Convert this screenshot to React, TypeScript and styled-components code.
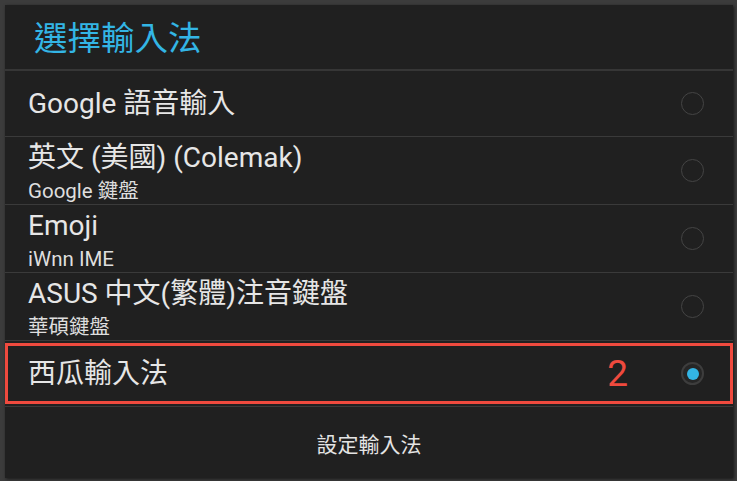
import React from "react";
import styled, { createGlobalStyle } from "styled-components";

const Global = createGlobalStyle`
  html, body { margin: 0; padding: 0; background: #3b3b3b; }
  body { font-family: Roboto, "Noto Sans CJK TC", sans-serif; }
`;

const Screen = styled.div`
  width: 737px;
  height: 481px;
  padding: 5px 4px 3px 5px;
  box-sizing: border-box;
  background: #3c3c3c;
`;

const Dialog = styled.div`
  width: 728px;
  height: 473px;
  background: #202020;
  box-shadow: 1px 1px 3px rgba(0, 0, 0, 0.6);
  display: flex;
  flex-direction: column;
`;

const Title = styled.div`
  height: 66px;
  display: flex;
  align-items: center;
  padding-left: 29px;
  padding-bottom: 3px;
  box-sizing: border-box;
  color: #33b5e5;
  font-size: 33.5px;
  font-family: Roboto, "Noto Sans CJK TC", sans-serif;
  border-bottom: 2px solid #363636;
`;

const List = styled.div`
  display: flex;
  flex-direction: column;
`;

const Row = styled.div<{ $h: number; $marked?: boolean }>`
  position: relative;
  height: ${(p) => p.$h}px;
  display: flex;
  align-items: center;
  padding: 0 29px 0 23px;
  border-bottom: 1px solid #3a3a3a;
  box-sizing: border-box;
  ${(p) =>
    p.$marked &&
    `
    &::after {
      content: "";
      position: absolute;
      left: 0;
      right: 0;
      top: 2px;
      bottom: 2px;
      border: 3px solid #ef4a3e;
    }
  `}
`;

const Texts = styled.div<{ $two?: boolean }>`
  flex: 1;
  display: flex;
  flex-direction: column;
  padding-top: ${(p) => (p.$two ? 4 : 0)}px;
`;

const Primary = styled.div`
  color: #e6e6e6;
  font-size: 28px;
  line-height: 34px;
  white-space: nowrap;
`;

const Secondary = styled.div`
  color: #dedede;
  font-size: 20.5px;
  line-height: 28px;
  margin-top: 2px;
  white-space: nowrap;
`;

const Badge = styled.div`
  color: #ef4a3e;
  font-size: 37px;
  font-family: Roboto, sans-serif;
  margin-right: 53px;
  line-height: 1;
`;

const Radio = styled.div<{ $on?: boolean }>`
  width: 23px;
  height: 23px;
  box-sizing: border-box;
  border-radius: 50%;
  border: ${(p) => (p.$on ? "2px solid #3d3d3d" : "1.5px solid #444")};
  background: ${(p) => (p.$on ? "#262626" : "transparent")};
  display: flex;
  align-items: center;
  justify-content: center;
`;

const Dot = styled.div`
  width: 12px;
  height: 12px;
  border-radius: 50%;
  background: #33b5e5;
`;

const Footer = styled.div`
  flex: 1;
  display: flex;
  align-items: center;
  justify-content: center;
  color: #e4e4e4;
  font-size: 21px;
`;

type Item = { title: string; sub?: string; h: number; on?: boolean; badge?: string };

const items: Item[] = [
  { title: "Google 語音輸入", h: 66 },
  { title: "英文 (美國) (Colemak)", sub: "Google 鍵盤", h: 68 },
  { title: "Emoji", sub: "iWnn IME", h: 68 },
  { title: "ASUS 中文(繁體)注音鍵盤", sub: "華碩鍵盤", h: 68 },
  { title: "西瓜輸入法", h: 66, on: true, badge: "2" },
];

export default function App() {
  return (
    <>
      <Global />
      <Screen>
        <Dialog>
          <Title>選擇輸入法</Title>
          <List>
            {items.map((it) => (
              <Row key={it.title} $h={it.h} $marked={it.on}>
                <Texts $two={!!it.sub}>
                  <Primary>{it.title}</Primary>
                  {it.sub && <Secondary>{it.sub}</Secondary>}
                </Texts>
                {it.badge && <Badge>{it.badge}</Badge>}
                <Radio $on={it.on}>{it.on && <Dot />}</Radio>
              </Row>
            ))}
          </List>
          <Footer>設定輸入法</Footer>
        </Dialog>
      </Screen>
    </>
  );
}
